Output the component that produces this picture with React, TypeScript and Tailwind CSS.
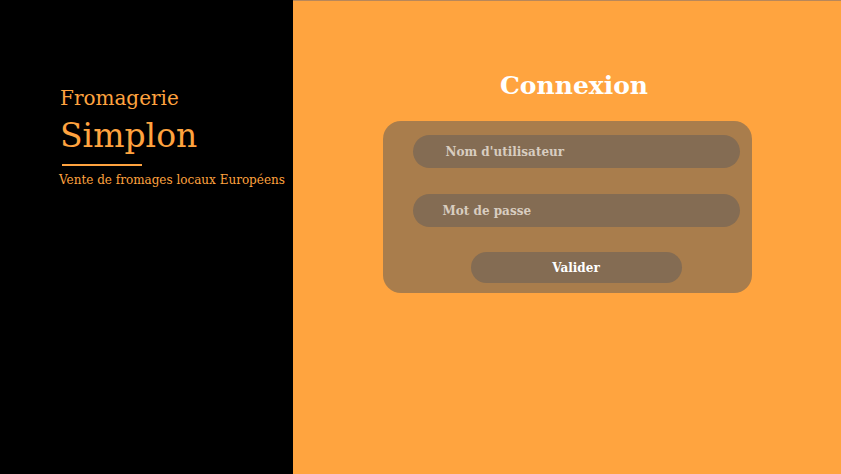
import React from 'react';

const serif = { fontFamily: '"DejaVu Serif", "Liberation Serif", serif' };

const Brand: React.FC = () => (
  <div className="w-[293px] h-full bg-black pl-[60px] pt-[84px]" style={serif}>
    <p className="text-[20px] leading-[28px] text-[#ffa33f]">Fromagerie</p>
    <h1 className="text-[33px] leading-[44px] text-[#ffa33f] mt-[2px]">Simplon</h1>
    <div className="w-[80px] h-[2px] bg-[#ffa33f] ml-[2px] mt-[6px]" />
    <p className="text-[12px] leading-[18px] text-[#ffa33f] mt-[5px] -ml-[1px] whitespace-nowrap">
      Vente de fromages locaux Européens
    </p>
  </div>
);

const LoginForm: React.FC = () => (
  <div className="flex-1 h-full bg-[#ffa43f] border-t border-t-[#b8875a] flex flex-col items-center pt-[66px]" style={serif}>
    <h2 className="text-[25px] leading-[38px] font-bold text-white ml-[14px]">Connexion</h2>
    <form className="mt-[16px] w-[369px] h-[172px] rounded-[18px] bg-[#a97d4c] flex flex-col pt-[14px] pl-[30px] pr-[12px]">
      <div className="h-[33px] rounded-full bg-[#846c53] flex items-center pl-[33px]">
        <span className="text-[12px] font-bold text-[#d8cdc0]">Nom d'utilisateur</span>
      </div>
      <div className="h-[33px] rounded-full bg-[#846c53] flex items-center pl-[30px] mt-[26px]">
        <span className="text-[12px] font-bold text-[#d8cdc0]">Mot de passe</span>
      </div>
      <div className="flex justify-center mt-[25px]">
        <button type="button" className="w-[211px] h-[31px] rounded-full bg-[#846c53] text-[12px] font-bold text-white">
          Valider
        </button>
      </div>
    </form>
  </div>
);

export default function App() {
  return (
    <div className="flex w-[841px] h-[474px]">
      <Brand />
      <LoginForm />
    </div>
  );
}
